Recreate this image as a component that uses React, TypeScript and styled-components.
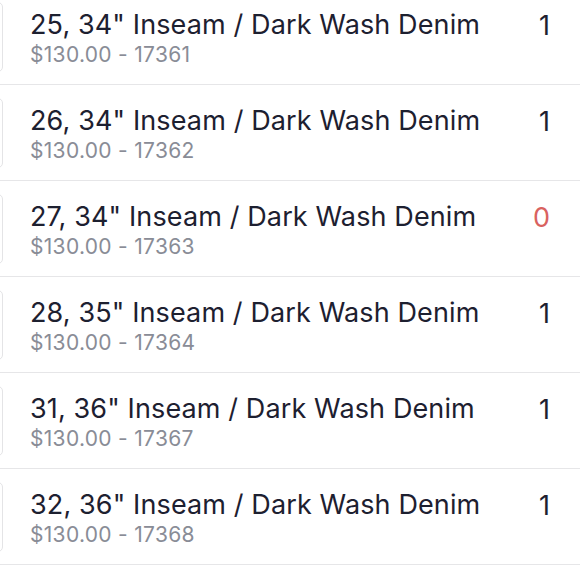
import styled, { createGlobalStyle } from 'styled-components';

const GlobalStyle = createGlobalStyle`
  html, body {
    margin: 0;
    padding: 0;
    background: #ffffff;
    overflow: hidden;
  }
  body {
    font-family: 'Inter', 'Noto Sans', sans-serif;
    -webkit-font-smoothing: antialiased;
  }
`;

interface Variant {
  title: string;
  price: string;
  sku: string;
  qty: number;
}

const variants: Variant[] = [
  { title: '25, 34" Inseam / Dark Wash Denim', price: '$130.00', sku: '17361', qty: 1 },
  { title: '26, 34" Inseam / Dark Wash Denim', price: '$130.00', sku: '17362', qty: 1 },
  { title: '27, 34" Inseam / Dark Wash Denim', price: '$130.00', sku: '17363', qty: 0 },
  { title: '28, 35" Inseam / Dark Wash Denim', price: '$130.00', sku: '17364', qty: 1 },
  { title: '31, 36" Inseam / Dark Wash Denim', price: '$130.00', sku: '17367', qty: 1 },
  { title: '32, 36" Inseam / Dark Wash Denim', price: '$130.00', sku: '17368', qty: 1 },
];

export default function App() {
  return (
    <>
      <GlobalStyle />
      <List>
        {variants.map((v) => (
          <Row key={v.sku}>
            <Thumb />
            <Info>
              <Title>{v.title}</Title>
              <Sub>{v.price} - {v.sku}</Sub>
            </Info>
            <Qty $empty={v.qty === 0}>{v.qty}</Qty>
          </Row>
        ))}
      </List>
    </>
  );
}

const List = styled.div`
  display: flex;
  flex-direction: column;
  margin-top: -11px;
`;

const Row = styled.div`
  display: flex;
  align-items: center;
  height: 95px;
  border-bottom: 1px solid #e6e6e8;
  padding-right: 30px;
`;

const Thumb = styled.div`
  flex: none;
  width: 60px;
  height: 70px;
  margin-left: -57px;
  border: 1px solid #e4e4e6;
  border-radius: 5px;
  box-sizing: border-box;
  background: #ffffff;
`;

const Info = styled.div`
  flex: 1;
  display: flex;
  flex-direction: column;
  margin-left: 27px;
  padding-top: 4px;
`;

const Title = styled.div`
  font-size: 27px;
  line-height: 32px;
  font-weight: 400;
  color: #1d2030;
  letter-spacing: 0.12px;
`;

const Sub = styled.div`
  font-size: 21px;
  line-height: 27px;
  color: #898c96;
  letter-spacing: 0.3px;
`;

const Qty = styled.div<{ $empty: boolean }>`
  font-size: 27px;
  line-height: 32px;
  margin-bottom: 22px;
  color: ${(p) => (p.$empty ? '#d9625f' : '#1d2030')};
`;
